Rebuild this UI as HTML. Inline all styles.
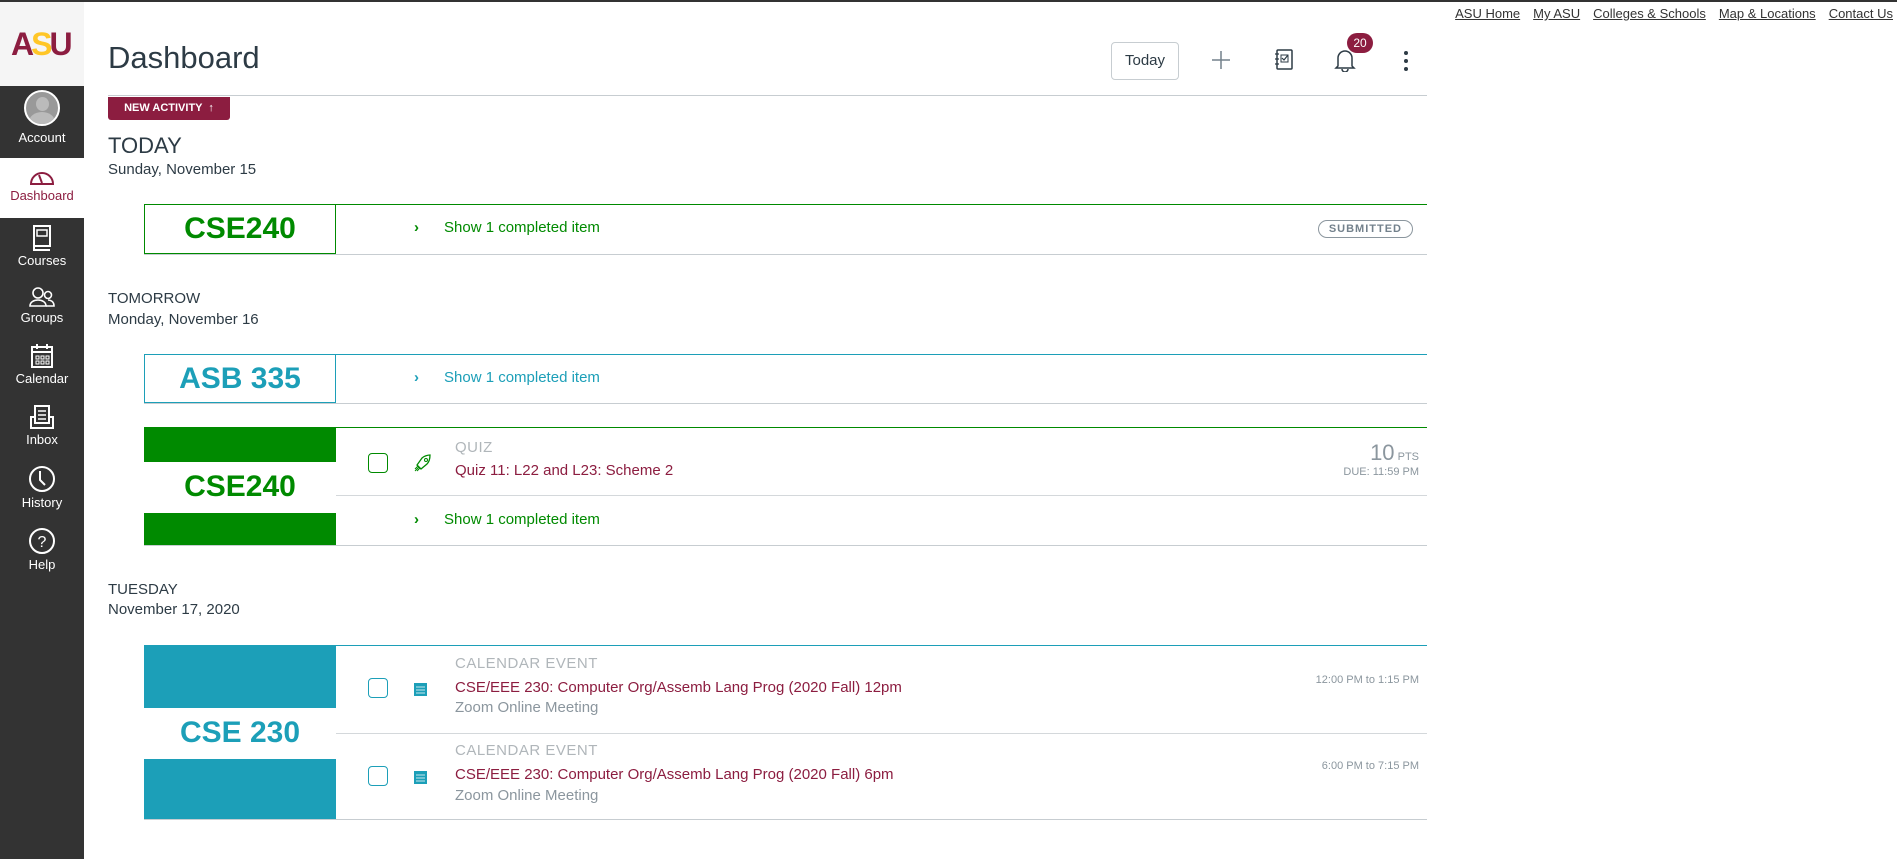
<!DOCTYPE html>
<html><head><meta charset="utf-8"><style>
*{box-sizing:border-box;margin:0;padding:0}
body{width:1897px;height:859px;overflow:hidden;background:#fff;font-family:"Liberation Sans",sans-serif;color:#2d3b45;position:relative}
.abs{position:absolute}
#topline{left:0;top:0;width:1897px;height:2px;background:#333}
#side{left:0;top:2px;width:84px;height:857px;background:#333}
#logo{left:0;top:2px;width:84px;height:84px;background:#f5f5f5}
.nav{position:absolute;left:0;width:84px;text-align:center;color:#fff;font-size:13px}
.nav svg{display:block;margin:0 auto 2px}
.links{top:6px;right:4px;font-size:13px;color:#333}
.links a{color:#333;text-decoration:underline;margin-left:13px}
h1{position:absolute;left:108px;top:40px;font-size:31px;font-weight:normal;color:#2d3b45}
.hr{left:108px;top:95px;width:1319px;height:1px;background:#c7cdd1}
.badge{left:108px;top:97px;width:122px;height:23px;background:#8c1d40;color:#fff;font-size:11px;font-weight:bold;line-height:23px;text-align:center;border-radius:0 0 3px 3px}
.day{font-size:22px;left:108px}
.dsm{font-size:15px;left:108px}
.card{position:absolute;left:144px;width:1283px;border-top:1px solid;border-bottom:1px solid #c7cdd1}
.lbox{position:absolute;left:0;top:0;width:192px;height:100%;border-right:1px solid;font-size:30px;font-weight:bold;display:flex;align-items:center;justify-content:center}
.show{position:absolute;left:270px;font-size:15px}
.show span{display:inline-block;width:30px;font-weight:bold}
.cb{position:absolute;left:224px;width:20px;height:20px;border:1.5px solid;border-radius:4px}
.lbl{position:absolute;left:311px;font-size:15px;color:#b0b6ba;letter-spacing:.5px}
.ttl{position:absolute;left:311px;font-size:15px;color:#8c1d40}
.sub{position:absolute;left:311px;font-size:15px;color:#8b969e}
.rt{position:absolute;right:8px;font-size:11px;color:#8b969e;text-align:right}
.sep{position:absolute;left:192px;right:0;height:1px;background:#d4d8db}
</style></head><body>
<div class="abs" id="side"></div>
<div class="abs" id="topline"></div>
<div class="abs" id="logo"><div style="position:absolute;left:11px;top:24px;font:bold 32px 'Liberation Sans',sans-serif;color:#8c1d40;letter-spacing:-3px">A<span style="color:#ffc627">S</span>U</div></div>
<div class="nav" style="top:90px"><div style="width:36px;height:36px;border-radius:50%;border:2px solid #fff;background:#999;margin:0 auto 4px;overflow:hidden;position:relative"><div style="position:absolute;left:10px;top:5px;width:13px;height:14px;border-radius:50%;background:#bbb"></div><div style="position:absolute;left:3px;top:20px;width:26px;height:20px;border-radius:50%;background:#bbb"></div></div>Account</div>
<div class="abs" style="left:0;top:158px;width:84px;height:60px;background:#fff"></div>
<div class="nav" style="top:166px;color:#8c1d40"><svg width="28" height="20" viewBox="0 0 28 20"><path d="M3 18 A11 11 0 1 1 25 18 Z" fill="none" stroke="#8c1d40" stroke-width="2"/><path d="M14 17 L11 9" stroke="#8c1d40" stroke-width="2"/></svg>Dashboard</div>
<div class="nav" style="top:225px"><svg width="20" height="26" viewBox="0 0 20 26"><rect x="2" y="1" width="16" height="20" fill="none" stroke="#fff" stroke-width="2"/><rect x="5" y="5" width="10" height="6" fill="none" stroke="#fff" stroke-width="1.5"/><path d="M2 21 L2 25 H18" fill="none" stroke="#fff" stroke-width="2"/></svg>Courses</div>
<div class="nav" style="top:286px"><svg width="28" height="22" viewBox="0 0 28 22"><circle cx="10" cy="7" r="5" fill="none" stroke="#fff" stroke-width="1.6"/><path d="M2 20 C2 12 18 12 18 20 Z" fill="none" stroke="#fff" stroke-width="1.6"/><circle cx="20" cy="9" r="3.5" fill="none" stroke="#fff" stroke-width="1.6"/><path d="M18 20 H26 C26 15 22 14 20 14" fill="none" stroke="#fff" stroke-width="1.6"/></svg>Groups</div>
<div class="nav" style="top:343px"><svg width="24" height="26" viewBox="0 0 24 26"><rect x="2" y="4" width="20" height="20" fill="none" stroke="#fff" stroke-width="2"/><path d="M2 9 H22 M7 1 V6 M17 1 V6" stroke="#fff" stroke-width="2"/><path d="M6 13h3v3H6zM11 13h3v3h-3zM16 13h3v3h-3zM6 18h3v3H6zM11 18h3v3h-3zM16 18h3v3h-3z" fill="none" stroke="#fff" stroke-width="1"/></svg>Calendar</div>
<div class="nav" style="top:404px"><svg width="26" height="26" viewBox="0 0 26 26"><rect x="6" y="2" width="14" height="17" fill="none" stroke="#fff" stroke-width="2"/><path d="M9 7h8M9 11h8M9 15h8" stroke="#fff" stroke-width="1.5"/><path d="M6 13 H2 V24 H24 V13 H20" fill="none" stroke="#fff" stroke-width="2"/></svg>Inbox</div>
<div class="nav" style="top:465px"><svg width="28" height="28" viewBox="0 0 28 28"><circle cx="14" cy="14" r="12" fill="none" stroke="#fff" stroke-width="2"/><path d="M12 6 V15 L17 20" fill="none" stroke="#fff" stroke-width="2"/></svg>History</div>
<div class="nav" style="top:527px"><svg width="28" height="28" viewBox="0 0 28 28"><circle cx="14" cy="14" r="12" fill="none" stroke="#fff" stroke-width="2"/><text x="14" y="20" font-size="16" fill="#fff" text-anchor="middle" font-family="Liberation Sans">?</text></svg>Help</div>

<div class="abs links"><a>ASU Home</a><a>My ASU</a><a>Colleges &amp; Schools</a><a>Map &amp; Locations</a><a>Contact Us</a></div>

<h1>Dashboard</h1>
<div class="abs" style="left:1111px;top:42px;width:68px;height:38px;border:1px solid #c7cdd1;border-radius:4px;font-size:15px;line-height:36px;text-align:center">Today</div>
<svg class="abs" style="left:1212px;top:51px" width="18" height="18"><path d="M9 0V18M0 9H18" stroke="#73818c" stroke-width="1.5"/></svg>
<svg class="abs" style="left:1274px;top:49px" width="20" height="22"><rect x="3" y="1" width="15" height="19" rx="1" fill="none" stroke="#2d3b45" stroke-width="1.5"/><path d="M1 5h4M1 10h4M1 15h4" stroke="#2d3b45" stroke-width="1.3"/><rect x="7" y="6" width="7" height="7" fill="none" stroke="#2d3b45" stroke-width="1"/><path d="M8 9l2 2 4-5" fill="none" stroke="#2d3b45" stroke-width="1.2"/></svg>
<svg class="abs" style="left:1334px;top:48px" width="22" height="24"><path d="M4 18 V10 A7 7 0 0 1 18 10 V18 L20 20 H2 Z" fill="none" stroke="#2d3b45" stroke-width="1.5"/><path d="M8 21 A3 3 0 0 0 14 21" fill="none" stroke="#2d3b45" stroke-width="1.5"/></svg>
<div class="abs" style="left:1347px;top:33px;width:26px;height:20px;border-radius:10px;background:#8c1d40;color:#fff;font-size:12px;line-height:20px;text-align:center">20</div>
<svg class="abs" style="left:1403px;top:50px" width="6" height="22"><circle cx="3" cy="3" r="2" fill="#2d3b45"/><circle cx="3" cy="11" r="2" fill="#2d3b45"/><circle cx="3" cy="19" r="2" fill="#2d3b45"/></svg>
<div class="abs hr"></div>
<div class="abs badge">NEW ACTIVITY &nbsp;↑</div>

<div class="abs day" style="top:133px">TODAY</div>
<div class="abs dsm" style="top:161px">Sunday, November 15</div>
<div class="card" style="top:204px;height:51px;border-top-color:#008a00">
 <div class="lbox" style="color:#008a00;border-color:#008a00;border-left:1px solid #008a00;border-bottom:1px solid #008a00">CSE240</div>
 <div class="show" style="top:14px;color:#008a00"><span>›</span>Show 1 completed item</div>
 <div style="position:absolute;right:14px;top:15px;border:1.5px solid #8b969e;border-radius:12px;font-size:11px;font-weight:bold;color:#73818c;padding:2px 10px;letter-spacing:1px">SUBMITTED</div>
</div>

<div class="abs dsm" style="top:290px">TOMORROW</div>
<div class="abs dsm" style="top:311px">Monday, November 16</div>
<div class="card" style="top:354px;height:50px;border-top-color:#1c9fb8">
 <div class="lbox" style="color:#1c9fb8;border-color:#1c9fb8;border-left:1px solid #1c9fb8;border-bottom:1px solid #1c9fb8">ASB 335</div>
 <div class="show" style="top:14px;color:#1c9fb8"><span>›</span>Show 1 completed item</div>
</div>

<div class="card" style="top:427px;height:119px;border-top-color:#008a00">
 <div class="lbox" style="color:#008a00;border:none;background:linear-gradient(#008a00 0,#008a00 34px,#fff 34px,#fff 85px,#008a00 85px)">CSE240</div>
 <div class="cb" style="top:25px;border-color:#008a00"></div>
 <svg style="position:absolute;left:270px;top:26px" width="18" height="18" viewBox="0 0 18 18"><path d="M5 13 L3 11 L8 4 C10 2 14 1 16 1 C16 4 15 8 13 10 L7 15 Z" fill="none" stroke="#008a00" stroke-width="1.3"/><circle cx="12" cy="6" r="1.5" fill="none" stroke="#008a00"/><path d="M1 17l4-4M3 17l3-3M1 15l3-3" stroke="#008a00" stroke-width="1"/></svg>
 <div class="lbl" style="top:11px">QUIZ</div>
 <div class="ttl" style="top:34px">Quiz 11: L22 and L23: Scheme 2</div>
 <div class="rt" style="top:12px"><span style="font-size:22px">10</span> PTS<br>DUE: 11:59 PM</div>
 <div class="sep" style="top:67px"></div>
 <div class="show" style="top:83px;color:#008a00"><span>›</span>Show 1 completed item</div>
</div>

<div class="abs dsm" style="top:581px">TUESDAY</div>
<div class="abs dsm" style="top:601px">November 17, 2020</div>
<div class="card" style="top:645px;height:175px;border-top-color:#1c9fb8">
 <div class="lbox" style="color:#1c9fb8;border:none;background:linear-gradient(#1c9fb8 0,#1c9fb8 62px,#fff 62px,#fff 113px,#1c9fb8 113px)">CSE 230</div>
 <div class="cb" style="top:32px;border-color:#1c9fb8"></div>
 <svg style="position:absolute;left:270px;top:35px" width="13" height="15"><rect x="0" y="2" width="13" height="13" fill="#1c9fb8"/><path d="M2 6h9M2 9h9M2 12h9" stroke="#fff" stroke-width=".8"/></svg>
 <div class="lbl" style="top:9px">CALENDAR EVENT</div>
 <div class="ttl" style="top:33px">CSE/EEE 230: Computer Org/Assemb Lang Prog (2020 Fall) 12pm</div>
 <div class="sub" style="top:53px">Zoom Online Meeting</div>
 <div class="rt" style="top:28px">12:00 PM to 1:15 PM</div>
 <div class="sep" style="top:87px"></div>
 <div class="cb" style="top:120px;border-color:#1c9fb8"></div>
 <svg style="position:absolute;left:270px;top:123px" width="13" height="15"><rect x="0" y="2" width="13" height="13" fill="#1c9fb8"/><path d="M2 6h9M2 9h9M2 12h9" stroke="#fff" stroke-width=".8"/></svg>
 <div class="lbl" style="top:96px">CALENDAR EVENT</div>
 <div class="ttl" style="top:120px">CSE/EEE 230: Computer Org/Assemb Lang Prog (2020 Fall) 6pm</div>
 <div class="sub" style="top:141px">Zoom Online Meeting</div>
 <div class="rt" style="top:114px">6:00 PM to 7:15 PM</div>
</div>
</body></html>
